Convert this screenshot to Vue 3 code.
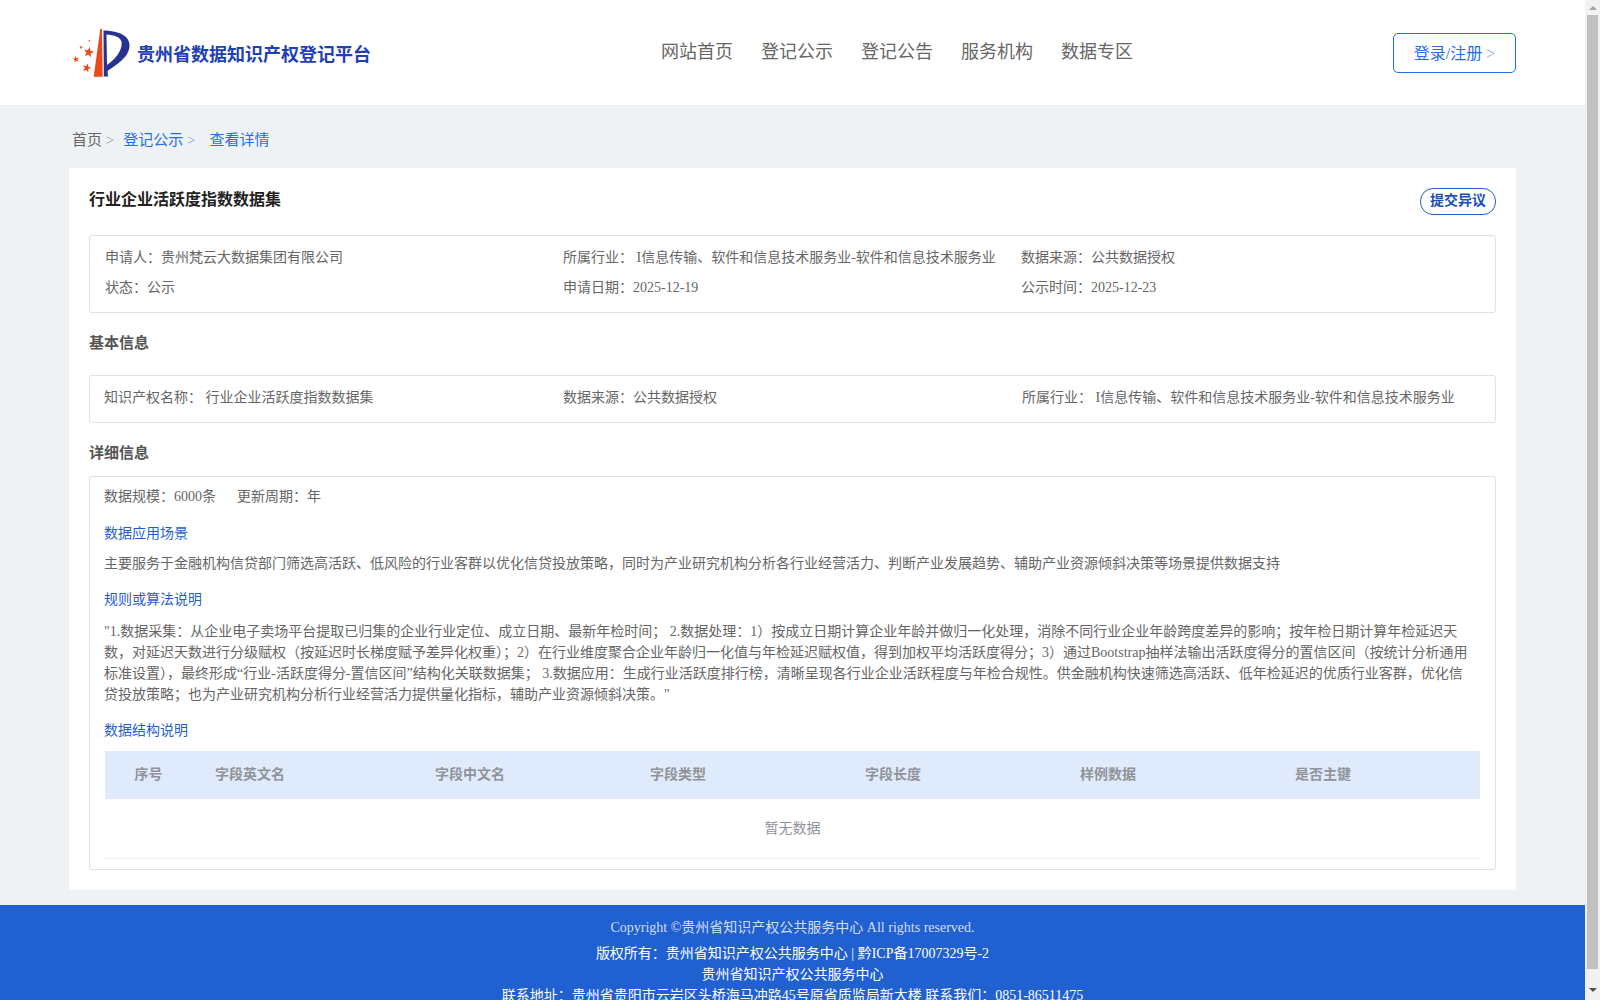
<template>
  <div class="page">
    <div class="viewport">
      <header class="top">
        <div class="brand">
          <svg class="logo" viewBox="0 0 60 50" width="60" height="50">
            <path d="M30.3 0.7 L32 0.7 L32.7 48.7 L23.7 48.7 Z" fill="#ea4a1a" />
            <path fill-rule="evenodd" d="M33.5 2.5 C46 3 59 6 59.5 17 C60 29 46 37 37.5 43 L38 48.5 L33.8 48.5 Z M36.5 6.5 L37 37 C44 32 52 24 51.7 15 C51.5 9 44 7 36.5 6.5 Z" fill="#27338f" />
            <polygon v-for="(s, i) in stars" :key="i" :points="s" fill="#ea4a1a" />
          </svg>
          <span class="brand-name">贵州省数据知识产权登记平台</span>
        </div>
        <nav class="nav">
          <a v-for="n in navItems" :key="n">{{ n }}</a>
        </nav>
        <button class="login">登录/注册 <i>&gt;</i></button>
      </header>

      <main class="content">
        <div class="crumbs">
          <span class="crumb-home">首页 <i>&gt;</i></span>
          <span class="crumb-link">登记公示 <i>&gt;</i></span>
          <span class="crumb-link">查看详情</span>
        </div>

        <section class="card">
          <div class="card-head">
            <h1>行业企业活跃度指数数据集</h1>
            <button class="objection">提交异议</button>
          </div>

          <div class="box summary">
            <div v-for="c in summary" :key="c" class="cell">{{ c }}</div>
          </div>

          <h2 class="basic-title">基本信息</h2>
          <div class="box basic">
            <div v-for="c in basic" :key="c" class="cell">{{ c }}</div>
          </div>

          <h2 class="detail-title">详细信息</h2>
          <div class="box detail">
            <div class="scale"><span>数据规模：6000条</span><span>更新周期：年</span></div>
            <h3>数据应用场景</h3>
            <p>主要服务于金融机构信贷部门筛选高活跃、低风险的行业客群以优化信贷投放策略，同时为产业研究机构分析各行业经营活力、判断产业发展趋势、辅助产业资源倾斜决策等场景提供数据支持</p>
            <h3 class="next">规则或算法说明</h3>
            <p class="rule">"1.数据采集：从企业电子卖场平台提取已归集的企业行业定位、成立日期、最新年检时间； 2.数据处理：1）按成立日期计算企业年龄并做归一化处理，消除不同行业企业年龄跨度差异的影响；按年检日期计算年检延迟天数，对延迟天数进行分级赋权（按延迟时长梯度赋予差异化权重）；2）在行业维度聚合企业年龄归一化值与年检延迟赋权值，得到加权平均活跃度得分；3）通过Bootstrap抽样法输出活跃度得分的置信区间（按统计分析通用标准设置），最终形成“行业-活跃度得分-置信区间”结构化关联数据集； 3.数据应用：生成行业活跃度排行榜，清晰呈现各行业企业活跃程度与年检合规性。供金融机构快速筛选高活跃、低年检延迟的优质行业客群，优化信贷投放策略；也为产业研究机构分析行业经营活力提供量化指标，辅助产业资源倾斜决策。"</p>
            <h3 class="next">数据结构说明</h3>
            <div class="table">
              <div class="thead">
                <div v-for="h in columns" :key="h" class="th">{{ h }}</div>
              </div>
              <div class="empty">暂无数据</div>
            </div>
          </div>
        </section>
      </main>

      <footer class="foot">
        <div class="copy">Copyright ©贵州省知识产权公共服务中心 All rights reserved.</div>
        <div>版权所有：贵州省知识产权公共服务中心 | 黔ICP备17007329号-2</div>
        <div>贵州省知识产权公共服务中心</div>
        <div>联系地址：贵州省贵阳市云岩区头桥海马冲路45号原省质监局新大楼 联系我们：0851-86511475</div>
      </footer>
    </div>
    <div class="scrollbar">
      <span class="arrow up"></span>
      <span class="thumb"></span>
      <span class="arrow down"></span>
    </div>
  </div>
</template>

<script setup>
const navItems = ['网站首页', '登记公示', '登记公告', '服务机构', '数据专区']

// five pointed star, rotated a little like the ones in the logo
const star = (cx, cy, r, tilt) => {
  const pts = []
  for (let i = 0; i < 10; i++) {
    const rad = i % 2 ? r * 0.42 : r
    const a = ((-90 + tilt + i * 36) * Math.PI) / 180
    pts.push(`${(cx + rad * Math.cos(a)).toFixed(1)},${(cy + rad * Math.sin(a)).toFixed(1)}`)
  }
  return pts.join(' ')
}

const stars = [
  star(18.7, 24.3, 5.4, 12),
  star(6, 31.3, 3.4, -10),
  star(16.7, 40, 4.6, 15),
  star(11, 19.3, 1.9, 0),
  star(19.3, 12.7, 1.2, 0)
]

const summary = [
  '申请人：贵州梵云大数据集团有限公司',
  '所属行业： I信息传输、软件和信息技术服务业-软件和信息技术服务业',
  '数据来源：公共数据授权',
  '状态：公示',
  '申请日期：2025-12-19',
  '公示时间：2025-12-23'
]

const basic = [
  '知识产权名称： 行业企业活跃度指数数据集',
  '数据来源：公共数据授权',
  '所属行业： I信息传输、软件和信息技术服务业-软件和信息技术服务业'
]

const columns = ['序号', '字段英文名', '字段中文名', '字段类型', '字段长度', '样例数据', '是否主键']
</script>

<style>
html, body {
  margin: 0;
  height: 100%;
  overflow: hidden;
}
</style>

<style scoped>
.page {
  display: flex;
  height: 100vh;
  overflow: hidden;
  background: #eff2f5;
  font-family: "Liberation Serif", "Noto Sans CJK SC", serif;
  font-size: 14px;
  color: #666;
}

.viewport {
  flex: 1;
  min-width: 0;
}

.top {
  display: flex;
  align-items: center;
  height: 105px;
  padding: 0 69px 0 70px;
  background: #fff;
}

.brand {
  display: flex;
  align-items: center;
  width: 591px;
}

.logo {
  margin-right: 7px;
}

.brand-name {
  font-size: 18px;
  font-weight: 700;
  color: #1f3fb5;
  margin-top: 1px;
}

.nav {
  display: flex;
  gap: 28px;
  font-size: 18px;
  color: #666;
  margin-top: -5px;
}

.login {
  margin-left: auto;
  width: 123px;
  height: 40px;
  padding: 0 0 2px;
  border: 1px solid #1f6fe8;
  border-radius: 5px;
  background: #fff;
  color: #1f6fe8;
  font: inherit;
  font-size: 16px;
}

.login i,
.crumbs i {
  font-style: normal;
  opacity: 0.6;
}

.content {
  padding: 0 69px 15px;
}

.crumbs {
  display: flex;
  gap: 8px;
  height: 63px;
  box-sizing: border-box;
  align-items: center;
  padding: 4px 0 0 3px;
  font-size: 15px;
}

.crumb-link {
  color: #1f6fe8;
  margin-right: 6px;
}

.crumb-home {
  margin-right: 1px;
}

.card {
  background: #fff;
  padding: 20px;
  height: 722px;
  box-sizing: border-box;
}

.card-head {
  display: flex;
  justify-content: space-between;
  align-items: flex-start;
  height: 47px;
}

h1 {
  margin: 0;
  font-size: 16px;
  line-height: 24px;
  font-weight: 700;
  color: #222;
}

.objection {
  width: 76px;
  height: 27px;
  padding: 0 0 5px;
  border: 1px solid #2060d0;
  border-radius: 13px;
  background: #fff;
  color: #1a4fb8;
  font: inherit;
  font-weight: 700;
}

.box {
  border: 1px solid #e0e0e0;
  border-radius: 3px;
  box-sizing: border-box;
}

.summary {
  display: grid;
  grid-template-columns: repeat(3, 458px);
  grid-auto-rows: 30px;
  align-items: center;
  height: 78px;
  padding: 5px 15px;
}

h2 {
  margin: 0;
  font-size: 15px;
  line-height: 20px;
  font-weight: 700;
  color: #555;
}

.basic-title {
  margin-top: 20px;
}

.detail-title {
  margin-top: 20px;
}

.basic {
  display: grid;
  grid-template-columns: 459px 459px 458px;
  align-items: center;
  height: 48px;
  margin-top: 22px;
  padding: 0 14px 6px;
}

.detail {
  height: 394px;
  margin-top: 13px;
  padding: 0 14px;
}

.scale {
  display: flex;
  gap: 21px;
  height: 36px;
  align-items: center;
}

h3 {
  margin: 11px 0 0;
  font-size: 14px;
  font-weight: 400;
  line-height: 20px;
  color: #1f5fd0;
}

h3.next {
  margin-top: 16px;
}

p {
  margin: 9px 5px 0 0;
  line-height: 21px;
}

p.rule {
  margin-top: 11px;
}

.table {
  margin: 10px 1px 0;
  border-bottom: 1px solid #ebeef5;
}

.thead {
  display: grid;
  grid-template-columns: 85px 220px repeat(4, 215px) 210px;
  align-items: center;
  height: 48px;
  box-sizing: border-box;
  padding-bottom: 4px;
  background: #dfebfd;
  font-weight: 700;
  color: #909399;
}

.th {
  padding-left: 25px;
}

.th:first-child {
  padding-left: 2px;
  text-align: center;
}

.empty {
  height: 59px;
  line-height: 59px;
  text-align: center;
  color: #909399;
}

.foot {
  height: 200px;
  padding-top: 12px;
  background: #2060d0;
  color: #fff;
  text-align: center;
  line-height: 21px;
  box-sizing: border-box;
}

.copy {
  color: rgba(255, 255, 255, 0.8);
  margin-bottom: 5px;
}

.scrollbar {
  display: flex;
  flex-direction: column;
  align-items: center;
  width: 15px;
  background: #f1f1f1;
}

.arrow {
  width: 0;
  height: 0;
  border-left: 4px solid transparent;
  border-right: 4px solid transparent;
}

.up {
  margin: 6px 0 5px;
  border-bottom: 4px solid #a3a3a3;
}

.thumb {
  width: 11px;
  height: 954px;
  background: #c1c1c1;
}

.down {
  margin-top: 19px;
  border-top: 4px solid #505050;
}
</style>
